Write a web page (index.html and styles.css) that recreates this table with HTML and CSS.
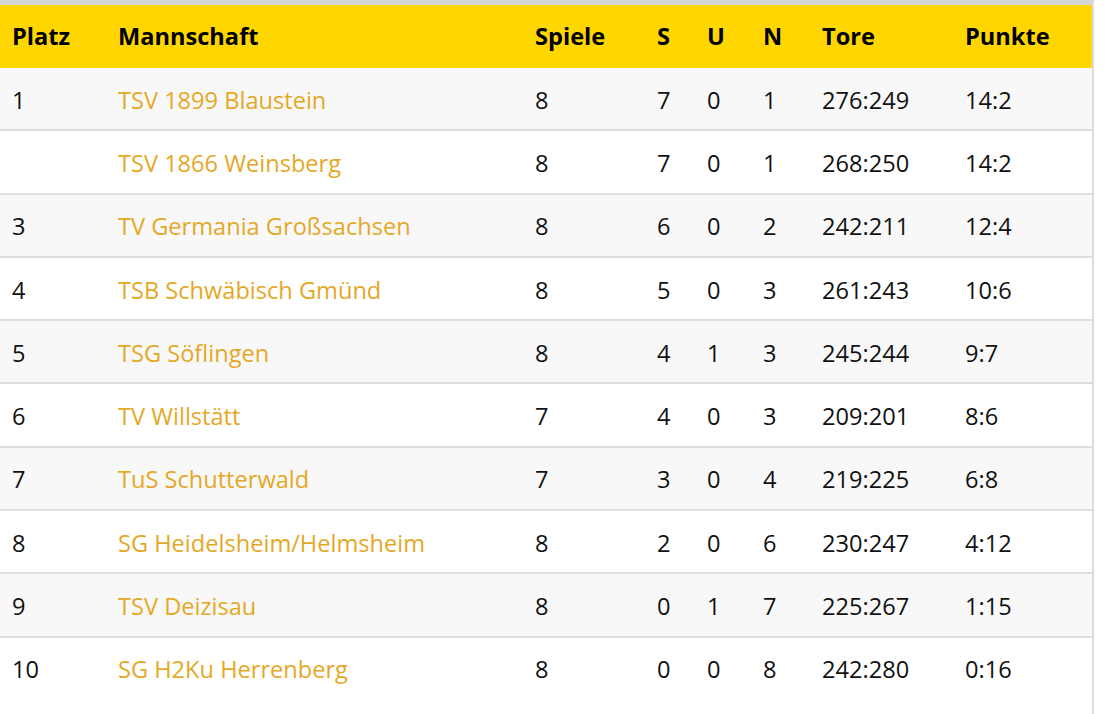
FILE: index.html
```html
<!DOCTYPE html>
<html lang="de">
<head>
<meta charset="utf-8">
<title>Tabelle</title>
<link rel="stylesheet" href="styles.css">
</head>
<body>
<div class="wrap">
<table class="standings">
<thead>
<tr>
<th class="c-platz">Platz</th>
<th class="c-team">Mannschaft</th>
<th class="c-sp">Spiele</th>
<th class="c-s">S</th>
<th class="c-u">U</th>
<th class="c-n">N</th>
<th class="c-tore">Tore</th>
<th class="c-pkt">Punkte</th>
</tr>
</thead>
<tbody>
<tr><td>1</td><td><a href="#">TSV 1899 Blaustein</a></td><td>8</td><td>7</td><td>0</td><td>1</td><td>276:249</td><td>14:2</td></tr>
<tr><td></td><td><a href="#">TSV 1866 Weinsberg</a></td><td>8</td><td>7</td><td>0</td><td>1</td><td>268:250</td><td>14:2</td></tr>
<tr><td>3</td><td><a href="#">TV Germania Großsachsen</a></td><td>8</td><td>6</td><td>0</td><td>2</td><td>242:211</td><td>12:4</td></tr>
<tr><td>4</td><td><a href="#">TSB Schwäbisch Gmünd</a></td><td>8</td><td>5</td><td>0</td><td>3</td><td>261:243</td><td>10:6</td></tr>
<tr><td>5</td><td><a href="#">TSG Söflingen</a></td><td>8</td><td>4</td><td>1</td><td>3</td><td>245:244</td><td>9:7</td></tr>
<tr><td>6</td><td><a href="#">TV Willstätt</a></td><td>7</td><td>4</td><td>0</td><td>3</td><td>209:201</td><td>8:6</td></tr>
<tr><td>7</td><td><a href="#">TuS Schutterwald</a></td><td>7</td><td>3</td><td>0</td><td>4</td><td>219:225</td><td>6:8</td></tr>
<tr><td>8</td><td><a href="#">SG Heidelsheim/Helmsheim</a></td><td>8</td><td>2</td><td>0</td><td>6</td><td>230:247</td><td>4:12</td></tr>
<tr><td>9</td><td><a href="#">TSV Deizisau</a></td><td>8</td><td>0</td><td>1</td><td>7</td><td>225:267</td><td>1:15</td></tr>
<tr><td>10</td><td><a href="#">SG H2Ku Herrenberg</a></td><td>8</td><td>0</td><td>0</td><td>8</td><td>242:280</td><td>0:16</td></tr>
</tbody>
</table>
</div>
</body>
</html>
```
FILE: styles.css
```css
html, body {
  margin: 0;
  padding: 0;
  background: #fff;
}
body {
  font-family: "Open Sans", "Liberation Sans", sans-serif;
  color: #111;
}
.wrap {
  width: 1092px;
  border-top: 5px solid #d6d6d6;
  border-right: 2px solid #dcdcdc;
  height: 709px;
  box-sizing: content-box;
  overflow: hidden;
}
.standings {
  width: 1092px;
  border-collapse: collapse;
  table-layout: fixed;
  font-size: 23.6px;
}
.standings th {
  background: #ffd600;
  font-weight: 700;
  text-align: left;
  height: 62px;
  padding: 0 0 1px 12px;
  color: #000;
}
.standings td {
  height: 59.3px;
  padding: 2px 0 0 12px;
  border-bottom: 2px solid #dedede;
  text-align: left;
}
.standings tbody tr:last-child td {
  border-bottom: 0;
}
.standings tbody tr:nth-child(odd) td {
  background: #f8f8f8;
}
.standings a {
  color: #e5a826;
  text-decoration: none;
}
.c-platz { width: 94px; }
.c-team { width: 405px; }
.c-sp { width: 110px; }
.c-s { width: 38px; }
.c-u { width: 44px; }
.c-n { width: 47px; }
.c-tore { width: 131px; }
.c-pkt { width: auto; }
```
